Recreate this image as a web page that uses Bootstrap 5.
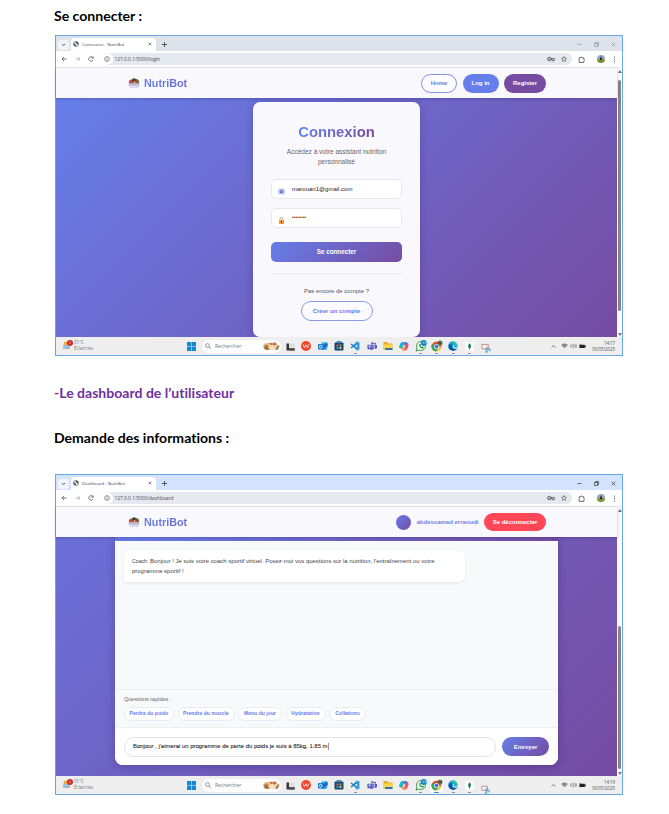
<!DOCTYPE html>
<html lang="fr">
<head>
<meta charset="utf-8">
<meta name="viewport" content="width=device-width, initial-scale=1">
<title>NutriBot</title>
<link href="https://cdn.jsdelivr.net/npm/bootstrap@5.3.0/dist/css/bootstrap.min.css" rel="stylesheet">
<style>
body{font-family:"Liberation Sans",Arial,sans-serif;font-size:6px;line-height:1;color:#333;background:#fff}
.sheet{width:669px;height:814px;padding:0 46px 0 54px}
.doc-h{font:700 14.05px/20px Lato,"Open Sans",sans-serif;font-variant-ligatures:none;color:#000;margin:0;white-space:nowrap}
.doc-h.violet{color:#7030a0}
.win{width:568px;height:321px;border:1px solid #67a7e2;background:#fff}
.win *{white-space:nowrap}
.ui{font-family:"Open Sans","Noto Sans",sans-serif}
.tabs{height:15px;flex:none;background:#dde2eb;padding:2px 6px 0 2px}
.win.active .tabs{background:#d3e2fd}
.tabbtn{width:11px;height:10px;border-radius:3px;background:#f1f4fa;margin-right:2px}
.tab-on{width:85px;height:13px;background:#fff;border-radius:4px 4px 0 0;padding:0 4px 1px 2px;font-size:4.3px;color:#444}
.tab-on .ticon{margin-right:3px}
.addr{height:17px;flex:none;padding:1px 4px 1px 3px;color:#4a4d51;border-bottom:1px solid #e9eaee}
.omni{width:471px;height:12px;border-radius:6px;background:#e5e8ef;margin-left:7px;padding:0 5px 0 0;font-size:4.85px}
.info-dot{width:12px;height:12px;border-radius:6px;background:#fff;margin-right:1.5px}
svg{display:block;flex:none}
.s5{width:5px;height:5px}.s6{width:6px;height:6px}.s7{width:7px;height:7px}.s8{width:8px;height:8px}.s9{width:9px;height:9px}.s10{width:10px;height:10px}.s12{width:12px;height:12px}
.view{height:269px}
.pagebody{width:561px}
.site-head{height:30px;flex:none;background:#f8f8fd;padding:0 71px 0 72px;box-shadow:0 1px 3px rgba(30,20,90,.28);z-index:1}
.brand{font-size:10.8px;font-weight:700;color:#667eea}
.brand span{background:linear-gradient(135deg,#667eea 20%,#6b68c8);-webkit-background-clip:text;color:transparent}
.pill{height:19px;border-radius:10px;font-weight:700;font-size:6px;color:#fff}
.p-home{width:36px;border:1px solid #7e91e4;color:#667eea;background:#fbfbff}
.p-log{width:36px;background:#667eea}
.p-reg{width:42px;background:#764ba2}
.p-out{width:62px;height:18px;background:#ff4757}
.grad{background:linear-gradient(135deg,#667eea,#764ba2)}
.stage{padding-left:59px;background:linear-gradient(135deg,#6a70d8,#764ba2)}
.login{width:167px;height:235px;margin-top:4px;border-radius:7px;background:#f8f8fd;padding:22px 18px 0;box-shadow:0 2px 8px rgba(40,20,90,.25)}
.login h2{font-size:14.8px;font-weight:700;line-height:16px;margin:0 0 7px;background:linear-gradient(135deg,#667eea 15%,#764ba2 85%);-webkit-background-clip:text;color:transparent}
.sub{font-size:6.5px;letter-spacing:.01px;line-height:10.4px;color:#666;margin-bottom:11.2px}
.field{height:20px;width:131px;border:1px solid #e6e7f0;border-radius:5px;background:#fff;color:#222;font-size:6px;padding-left:6px}
.field svg{margin:4px 7px 0 0}
.pw{font-size:4.6px;letter-spacing:.45px}
.btn-go{height:20px;width:131px;border-radius:5px;font-weight:700;font-size:6.3px;color:#fff;margin-top:14px}
.line{height:1px;background:#ebebf2;width:131px;margin-top:11px}
.p-new{width:72px;height:20px;border:1px solid #8a9be0;color:#667eea;background:#fbfbff;margin-top:7px;flex:none}
.sb{width:5px;background:#fafafa;padding:2px 0 1px}
.thumb{width:3px;background:#858585;border-radius:2px}
.t1{height:231px;margin-top:7px}.t2{height:143px;margin-top:114px}
.tri-u,.tri-d{border:2px solid transparent;width:0;height:0}
.tri-u{border-top:0;border-bottom:3px solid #777}
.tri-d{border-bottom:0;border-top:3px solid #777}
.task{height:18px;flex:none;background:#eee;color:#555}
.weather{width:127px;padding-left:7px;font-size:4.5px;line-height:5.6px;color:#777}
.weather svg{margin:-2px 1px 0 0}
.sbox{width:79px;height:13px;border-radius:7px;background:#fdfdfd;font-size:4.95px;color:#777;padding:0 1px 0 3px;margin-left:6px;margin-right:1px}
.app{width:16.3px;height:18px;position:relative}
.app.run::after{content:"";position:absolute;bottom:1px;left:6.6px;width:3px;height:1px;border-radius:1px;background:#8b8b8b}
.app.sel::before{content:"";position:absolute;inset:1.5px;background:#fafafa;border-radius:2px}
.app.sel::after{width:5px;left:5.6px;background:#3b8ad8}
.app svg{position:relative}
.app.low svg{top:2px}
.app.lower svg{top:4px}
.clock{width:27px;font-size:4.5px;line-height:6px;color:#555;letter-spacing:-.1px}
.avatar{width:15px;height:15px;border-radius:50%}
.chat{width:443px;height:228px;background:#f8f9fb;border-radius:0 0 8px 8px;box-shadow:0 2px 9px rgba(40,20,90,.3);overflow:hidden}
.chat-top{height:4px;flex:none}
.bubble{width:341px;height:32px;border-radius:7px 7px 7px 2px;background:#fff;margin:9px 0 0 9px;padding:7px 8px;font-size:5.96px;line-height:9.5px;color:#444;box-shadow:0 1px 3px rgba(0,0,0,.09)}
.bubble small{font-size:5.2px}
.quick{height:39px;border-top:1px solid #eceef2;border-bottom:1px solid #eceef2;padding:7px 9px 0;font-size:5.5px;color:#666}
.chip{height:14px;border:1px solid #e9ebf4;background:#fff;border-radius:7px;color:#667eea;font-size:5.1px;font-weight:700}
.c1{width:50px}.c2{width:57px}.c3{width:44px}.c4{width:40px}.c5{width:37px}
.ask{height:37px;background:#fff;padding:0 9px}
.msg{width:372px;height:20px;border:1px solid #dfe2ef;border-radius:10px;color:#222;padding-left:8px;font-size:5.95px;-webkit-text-stroke:.08px #222}
.caret{width:1px;height:7px;background:#999}
.send{width:47px;height:19px;border-radius:10px;color:#fff;font-weight:700;font-size:6px}
#h-login{margin-top:6px}
.w-one{margin-top:9px}
#h-dash{margin-top:27px}
#h-info{margin-top:25px}
.w-two{margin-top:26px}
.plus{margin-left:6px}
.wctl{gap:12px;opacity:.45}
.active .wctl{opacity:1}
.nav3{gap:7.5px;padding-left:2px}
.starico{margin-left:6px}
.tools{gap:6px}
.tools svg:first-child{margin-right:6px}
.links{gap:5.5px}
.f2{margin-top:9px}
.ask-new{margin-top:14px;color:#555;font-size:6px}
.field,.btn-go,.line{flex:none}
.uname{color:#7183de;font-size:6px}
.chips{gap:3.5px;margin-top:4px}
.quick,.ask{flex:none}
.wlogo{margin-left:4px}
.tray{gap:2px;padding-right:7px}
.wf{margin-left:3px}
</style>
<script src="https://cdn.jsdelivr.net/npm/bootstrap@5.3.0/dist/js/bootstrap.bundle.min.js"></script>
</head>
<body>
<svg width="0" height="0" class="position-absolute">
<defs>
<linearGradient id="gEdge" x1="0" y1="1" x2="1" y2="0"><stop offset="0" stop-color="#0867b9"/><stop offset=".55" stop-color="#19a5d9"/><stop offset="1" stop-color="#5cd66b"/></linearGradient>
</defs>
<symbol id="down" viewBox="0 0 10 10"><path d="M2 4l3 3 3-3" fill="none" stroke="currentColor" stroke-width="1.7"/></symbol>
<symbol id="up" viewBox="0 0 10 10"><path d="M1 7l4-4 4 4" fill="none" stroke="currentColor" stroke-width="1.5"/></symbol>
<symbol id="globe" viewBox="0 0 12 12"><circle cx="6" cy="6" r="5" fill="#fff" stroke="#4c5158" stroke-width="1.3"/><path d="M1 5l4 1 1 2-1 3-3-2zM6 1l-1 3 2 1 1 2 3-1-1-3z" fill="#4c5158"/></symbol>
<symbol id="x" viewBox="0 0 10 10"><path d="M1.5 1.5l7 7m0-7l-7 7" stroke="currentColor" stroke-width="1.5"/></symbol>
<symbol id="plus" viewBox="0 0 10 10"><path d="M5 0v10M0 5h10" stroke="currentColor" stroke-width="1.5"/></symbol>
<symbol id="min" viewBox="0 0 10 10"><path d="M1 5h8" stroke="currentColor" stroke-width="1.3"/></symbol>
<symbol id="max" viewBox="0 0 10 10"><path d="M1 3h6v6H1zM3 3V1h6v6H7" fill="none" stroke="currentColor" stroke-width="1.4"/></symbol>
<symbol id="back" viewBox="0 0 12 12"><path d="M11 6H2m4-4L2 6l4 4" fill="none" stroke="currentColor" stroke-width="1.5"/></symbol>
<symbol id="fwd" viewBox="0 0 12 12"><path d="M1 6h9M6 2l4 4-4 4" fill="none" stroke="currentColor" stroke-width="1.5"/></symbol>
<symbol id="reload" viewBox="0 0 12 12"><path d="M10 8a4.5 4.5 0 1 1-.6-5.2M10.5 1v3.5H7" fill="none" stroke="currentColor" stroke-width="1.5"/></symbol>
<symbol id="info" viewBox="0 0 12 12"><circle cx="6" cy="6" r="4.8" fill="none" stroke="currentColor" stroke-width="1.2"/><path d="M6 5.3v3.6M6 3v1.3" stroke="currentColor" stroke-width="1.4"/></symbol>
<symbol id="key" viewBox="0 0 14 10"><circle cx="4" cy="5" r="3" fill="none" stroke="currentColor" stroke-width="1.5"/><circle cx="4" cy="5" r="1" fill="currentColor"/><path d="M7 4h6v2.5h-1v2h-2v-2H7z" fill="none" stroke="currentColor" stroke-width="1.3"/></symbol>
<symbol id="star" viewBox="0 0 12 12"><path d="M6 1l1.500 3.400 3.600.3-2.800 2.400.9 3.600L6 8.800l-3.200 1.900.9-3.600L.9 4.700l3.600-.3z" fill="none" stroke="currentColor" stroke-width="1.2"/></symbol>
<symbol id="ext" viewBox="0 0 12 12"><path d="M2 3h2.500a1.300 1.300 0 0 1 2.600 0H10v3a1.300 1.300 0 0 1 0 2.500V11H2z" fill="none" stroke="currentColor" stroke-width="1.4"/></symbol>
<symbol id="face" viewBox="0 0 12 12"><circle cx="6" cy="6" r="6" fill="#8fa9c8"/><path d="M0 6h12a6 6 0 0 1-12 0" fill="#78983b"/><path d="M0 6h12v1.500H0" fill="#b7a83b"/><path d="M4.500 4h3l.5 4H4z" fill="#26323f"/><circle cx="6" cy="3.500" r="1.300" fill="#604c3a"/></symbol>
<symbol id="dots" viewBox="0 0 10 12"><path d="M5 1v2M5 5v2M5 9v2" stroke="currentColor" stroke-width="1.5"/></symbol>
<symbol id="salad" viewBox="0 0 24 24"><path d="M2 12C1 7 5 4 8 5c2-4 7-3 8-1 4 0 7 3 6 8z" fill="#467a3c"/><circle cx="7" cy="9" r="3.400" fill="#d44339"/><circle cx="17" cy="9" r="3.200" fill="#b84635"/><circle cx="12" cy="7" r="2.800" fill="#342d3a"/><path d="M11 11l2-4 2 4z" fill="#f0e4a8"/><path d="M1 12h22c0 7-4 10-8 10H9c-4 0-8-3-8-10" fill="#b8b3cd"/><path d="M3 15c4 3 14 3 18 0-2 6-5 7-8 7H9c-3 0-5-3-6-7" fill="#dedcea"/></symbol>
<symbol id="mail" viewBox="0 0 12 12"><rect y="1" width="12" height="10" fill="#cdd1ef"/><circle cx="6" cy="6" r="3.300" fill="#5274d3"/><path d="M4 6a2 2 0 1 1 3 1.700" fill="none" stroke="#c3ccf5"/></symbol>
<symbol id="lock" viewBox="0 0 12 14"><path d="M3 7V4a3 3 0 0 1 6 0v3" fill="none" stroke="#b2846e" stroke-width="1.5"/><rect x="1" y="6" width="10" height="8" rx="1" fill="#f39a35"/><path d="M6 8v4" stroke="#70402c" stroke-width="2"/></symbol>
<symbol id="sun" viewBox="0 0 20 20"><circle cx="7" cy="9" r="6" fill="#f4a53a"/><path d="M2 18a3.500 3.500 0 0 1 1-7c2-3 6-2 7 1 5-1 6 6 2 6z" fill="#8fc2f0"/><path d="M6 18l3-4 3 4z" fill="#e99a37"/><circle cx="14" cy="6" r="6" fill="#c92b2b"/><path d="M14 3v6" stroke="#f3c0c0" stroke-width="1.3"/></symbol>
<symbol id="winlogo" viewBox="0 0 18 18"><path d="M0 0h8.500v8.500H0zM9.500 0H18v8.500H9.500zM0 9.500h8.500V18H0zM9.500 9.500H18V18H9.500z" fill="#1587d5"/></symbol>
<symbol id="search" viewBox="0 0 12 12"><circle cx="5" cy="5" r="3.800" fill="none" stroke="currentColor" stroke-width="1.5"/><path d="M8 8l3.500 3.500" stroke="currentColor" stroke-width="1.7"/></symbol>
<symbol id="food" viewBox="0 0 34 20"><ellipse cx="9" cy="11" rx="8" ry="7" fill="#b98345"/><path d="M2 8c5-5 9-2 12 2" fill="none" stroke="#f0d69a" stroke-width="2.500"/><ellipse cx="20" cy="10" rx="9" ry="7" fill="#e9c99a"/><path d="M14 3l6 2 5-3 2 5-6 2-7-2z" fill="#cc6a53"/><path d="M10 13l9-6 7 8-8 4z" fill="#f3dfbe"/><path d="M24 17l4-5 2-4 3 2-4 8z" fill="#a0704c"/><circle cx="7" cy="14" r="2" fill="#7a5838"/></symbol>
<symbol id="desk" viewBox="0 0 18 18"><path d="M1 3h5v9h11v5H1z" fill="#353535"/><path d="M7 3h10v8H7z" fill="#dedede"/><path d="M6 12h11v5H6z" fill="#555"/></symbol>
<symbol id="wps" viewBox="0 0 20 20"><circle cx="10" cy="10" r="10" fill="#f1462f"/><path d="M4 6.500l3 7 3-6 3 6 3-7" fill="none" stroke="#ffe5d9" stroke-width="1.700"/></symbol>
<symbol id="outlook" viewBox="0 0 20 20"><path d="M7 3l10-1 3 7-3 9H7z" fill="#39abe8"/><path d="M7 10l12-7v6l-9 8z" fill="#1864b9"/><rect y="6" width="11" height="11" rx="2" fill="#1678d1"/><circle cx="5.500" cy="11.500" r="2.800" fill="none" stroke="#fff" stroke-width="1.500"/></symbol>
<symbol id="store" viewBox="0 0 20 20"><path d="M6 4V1h8v3" fill="none" stroke="#278bd0" stroke-width="2"/><rect x="1" y="3" width="18" height="16" rx="2" fill="#16446f"/><path d="M5 7h4v4H5z" fill="#ec5c43"/><path d="M11 7h4v4h-4z" fill="#6dbb49"/><path d="M5 12h4v4H5z" fill="#22a1ef"/><path d="M11 12h4v4h-4z" fill="#f3bd31"/></symbol>
<symbol id="code" viewBox="0 0 20 20"><path d="M14 1l5 2v14l-5 2z" fill="#27a2e8"/><path d="M14 5L2 14M2 6l12 9" stroke="#147bc3" stroke-width="3"/><path d="M14 1L7 9l7 10" fill="none" stroke="#1e91d8" stroke-width="2"/></symbol>
<symbol id="teams" viewBox="0 0 22 20"><circle cx="12" cy="4" r="3" fill="#6a6fd0"/><circle cx="18" cy="5" r="2" fill="#5158b9"/><path d="M7 8h9v6a5 5 0 0 1-9 3z" fill="#747ae0"/><path d="M17 8h5v6q-2 4-5 2z" fill="#555bc0"/><rect x="1" y="7" width="10" height="10" rx="1.500" fill="#4d53b5"/><path d="M3 10h6M6 10v5" stroke="#fff" stroke-width="1.600"/></symbol>
<symbol id="folder" viewBox="0 0 20 18"><path d="M1 1h7l2 3h9v12H1z" fill="#e7a92b"/><path d="M1 6h18v11H1z" fill="#ffd451"/><path d="M4 13h15v4H4z" fill="#2878b8"/></symbol>
<symbol id="copilot" viewBox="0 0 20 20"><path d="M6 2h8q2 0 3 4l-5 1-4 8H3q-3 0-2-5l2-5z" fill="#3188df"/><path d="M3 5l4-3h4L8 14H3q-3 0-2-4z" fill="#29b5c5"/><path d="M12 4h5q3 1 2 6l-3 7q-1 2-5 2H7l4-5z" fill="#e65581"/><path d="M6 13h7l-3 6H8q-2 0-4-5z" fill="#f3a638"/><path d="M13 2q3 0 4 4l-4 1z" fill="#8d52cf"/><path d="M9 8h3l-2 5H8z" fill="#eee"/></symbol>
<symbol id="whats" viewBox="0 0 24 24"><path d="M2 22l2-6a9 9 0 1 1 4 4z" fill="#f5fff7" stroke="#3d9950" stroke-width="2"/><path d="M8 9q0 7 8 9l2-3-3-2-2 1-2-3 1-2-2-2z" fill="#3d9950"/><circle cx="17.500" cy="6" r="6" fill="#1687c5"/><path d="M15 4h2v4m2-4h3l-2 4" fill="none" stroke="#bfe2f3" stroke-width="1"/></symbol>
<symbol id="chrome" viewBox="0 0 24 24"><circle cx="11" cy="13" r="10" fill="#f1c33b"/><path d="M11 13H21A10 10 0 0 0 2 9l5 9z" fill="#e24a3a"/><path d="M11 13L2 8a10 10 0 0 0 8 15l5-8z" fill="#38a35a"/><circle cx="11" cy="13" r="5" fill="#fff"/><circle cx="11" cy="13" r="3.800" fill="#3b7be0"/><circle cx="18" cy="6" r="5" fill="#6c7052"/><path d="M14 6h8" stroke="#3b4038" stroke-width="2"/></symbol>
<symbol id="edge" viewBox="0 0 20 20"><circle cx="10" cy="10" r="9.500" fill="url(#gEdge)"/><path d="M8 8c-2 4 1 9 7 8 2 0 3-1 4-2-2 5-7 6-11 5-5-1-8-6-6-10 1-3 4-3 6-1" fill="#0b57a4"/><path d="M10 9c2-1 3 1 2 3 1 2 4 2 7 0v2c-5 3-11 1-9-5" fill="#eef7fb"/></symbol>
<symbol id="mongo" viewBox="0 0 20 20"><rect width="20" height="20" rx="3" fill="#fafafa"/><path d="M10 3c5 5 4 9 0 12-4-3-4-7 0-12" fill="#13794e"/><path d="M10 13v4" stroke="#234b3b" stroke-width="1.500"/></symbol>
<symbol id="snip" viewBox="0 0 22 22"><path d="M2 3h14v10H2z" fill="#f5f5f5" stroke="#b4786b" stroke-width="1.800"/><path d="M9 13h10M13 7l0 12" stroke="#6d97ae" stroke-width="2"/><circle cx="12" cy="19" r="2.200" fill="none" stroke="#4399c8" stroke-width="1.700"/><circle cx="19" cy="15" r="2.200" fill="none" stroke="#4399c8" stroke-width="1.700"/></symbol>
<symbol id="wifi" viewBox="0 0 16 12"><path d="M1 4q7-6 14 0L8 11z" fill="#aaa"/><path d="M1 4q7-6 14 0M3.500 6.500q4.500-4 9 0M6 9q2-2 4 0" fill="none" stroke="#454545" stroke-width="1.200"/></symbol>
<symbol id="vol" viewBox="0 0 16 12"><path d="M1 4h3l3-3v10L4 8H1zM9 4q2 2 0 4M11 2q4 4 0 8M13 1q5 5 0 10" fill="none" stroke="#666" stroke-width="1.200"/></symbol>
<symbol id="batt" viewBox="0 0 18 12"><path d="M1 3h14v8H1zM16 5h2v4h-2z" fill="#222"/><path d="M2 0l4 4-3 3z" fill="#333"/></symbol>
</svg>

<main class="sheet d-flex flex-column">
  <h1 class="doc-h" id="h-login">Se connecter :</h1>

  <section class="win w-one d-flex flex-column ms-auto">
    <div class="tabs ui d-flex align-items-center">
      <span class="tabbtn d-flex align-items-center justify-content-center"><svg class="s5"><use href="#down"/></svg></span>
      <div class="tab-on d-flex align-items-center"><svg class="s6 ticon"><use href="#globe"/></svg><span>Connexion - NutriBot</span><svg class="ms-auto" width="4" height="4"><use href="#x"/></svg></div>
      <svg class="plus" width="5" height="5"><use href="#plus"/></svg>
      <div class="wctl d-flex align-items-center ms-auto"><svg class="s5"><use href="#min"/></svg><svg class="s5"><use href="#max"/></svg><svg class="s5"><use href="#x"/></svg></div>
    </div>
    <div class="addr ui d-flex align-items-center">
      <div class="nav3 d-flex"><svg class="s6"><use href="#back"/></svg><svg class="s6 opacity-50"><use href="#fwd"/></svg><svg class="s6"><use href="#reload"/></svg></div>
      <div class="omni d-flex align-items-center"><span class="info-dot d-flex align-items-center justify-content-center"><svg class="s6"><use href="#info"/></svg></span><span>127.0.0.1:5000/login</span><svg class="ms-auto" width="8" height="6"><use href="#key"/></svg><svg class="s6 starico"><use href="#star"/></svg></div>
      <div class="tools d-flex align-items-center ms-auto"><svg class="s7"><use href="#ext"/></svg><svg class="s8"><use href="#face"/></svg><svg class="s7"><use href="#dots"/></svg></div>
    </div>
    <div class="view d-flex">
      <div class="pagebody d-flex flex-column">
        <header class="site-head d-flex align-items-center position-relative">
          <div class="brand d-flex align-items-center"><svg class="s12 me-1"><use href="#salad"/></svg><span>NutriBot</span></div>
          <nav class="links d-flex ms-auto"><a class="pill p-home d-flex align-items-center justify-content-center text-decoration-none">Home</a><a class="pill p-log d-flex align-items-center justify-content-center text-decoration-none">Log in</a><a class="pill p-reg d-flex align-items-center justify-content-center text-decoration-none">Register</a></nav>
        </header>
        <div class="grad flex-grow-1 d-flex justify-content-center align-items-start">
          <form class="login d-flex flex-column align-items-center text-center">
            <h2>Connexion</h2>
            <div class="sub">Accédez à votre assistant nutrition<br>personnalisé</div>
            <div class="field d-flex align-items-center"><svg class="s7"><use href="#mail"/></svg><span>marouan1@gmail.com</span></div>
            <div class="field f2 d-flex align-items-center"><svg class="s7"><use href="#lock"/></svg><span class="pw">•••••••</span></div>
            <div class="btn-go grad d-flex align-items-center justify-content-center">Se connecter</div>
            <div class="line"></div>
            <div class="ask-new">Pas encore de compte ?</div>
            <div class="pill p-new d-flex align-items-center justify-content-center">Créer un compte</div>
          </form>
        </div>
      </div>
      <div class="sb d-flex flex-column align-items-center"><i class="tri-u"></i><i class="thumb t1"></i><i class="tri-d mt-auto"></i></div>
    </div>
    <div class="task ui d-flex align-items-center">
      <div class="weather d-flex align-items-center"><svg class="s10"><use href="#sun"/></svg><div>31°C<br>Éclaircies</div></div>
      <svg class="s9 wlogo"><use href="#winlogo"/></svg>
      <div class="sbox d-flex align-items-center"><svg class="s6 me-1"><use href="#search"/></svg>Rechercher<svg class="ms-auto" width="17" height="10"><use href="#food"/></svg></div>
      <div class="apps d-flex">
        <span class="app d-flex align-items-center justify-content-center"><svg class="s9"><use href="#desk"/></svg></span>
        <span class="app d-flex align-items-center justify-content-center"><svg class="s10"><use href="#wps"/></svg></span>
        <span class="app d-flex align-items-center justify-content-center"><svg class="s10"><use href="#outlook"/></svg></span>
        <span class="app d-flex align-items-center justify-content-center"><svg class="s10"><use href="#store"/></svg></span>
        <span class="app run d-flex align-items-center justify-content-center"><svg class="s10"><use href="#code"/></svg></span>
        <span class="app d-flex align-items-center justify-content-center"><svg class="s10"><use href="#teams"/></svg></span>
        <span class="app d-flex align-items-center justify-content-center"><svg class="s10"><use href="#folder"/></svg></span>
        <span class="app d-flex align-items-center justify-content-center"><svg class="s10"><use href="#copilot"/></svg></span>
        <span class="app run d-flex align-items-center justify-content-center"><svg class="s12"><use href="#whats"/></svg></span>
        <span class="app run d-flex align-items-center justify-content-center"><svg class="s12"><use href="#chrome"/></svg></span>
        <span class="app run d-flex align-items-center justify-content-center"><svg class="s10"><use href="#edge"/></svg></span>
        <span class="app run d-flex align-items-center justify-content-center"><svg class="s9"><use href="#mongo"/></svg></span>
        <span class="app low d-flex align-items-center justify-content-center"><svg class="s10"><use href="#snip"/></svg></span>
      </div>
      <div class="tray d-flex align-items-center ms-auto"><svg class="s5"><use href="#up"/></svg><svg class="wf" width="7" height="6"><use href="#wifi"/></svg><svg width="7" height="6"><use href="#vol"/></svg><svg width="7" height="6"><use href="#batt"/></svg><div class="clock text-end">14:17<br>30/05/2025</div></div>
    </div>
  </section>

  <h2 class="doc-h violet" id="h-dash">-Le dashboard de l’utilisateur</h2>
  <h2 class="doc-h" id="h-info">Demande des informations :</h2>

  <section class="win w-two active d-flex flex-column ms-auto">
    <div class="tabs ui d-flex align-items-center">
      <span class="tabbtn d-flex align-items-center justify-content-center"><svg class="s5"><use href="#down"/></svg></span>
      <div class="tab-on d-flex align-items-center"><svg class="s6 ticon"><use href="#globe"/></svg><span>Dashboard - NutriBot</span><svg class="ms-auto" width="4" height="4"><use href="#x"/></svg></div>
      <svg class="plus" width="5" height="5"><use href="#plus"/></svg>
      <div class="wctl d-flex align-items-center ms-auto"><svg class="s5"><use href="#min"/></svg><svg class="s5"><use href="#max"/></svg><svg class="s5"><use href="#x"/></svg></div>
    </div>
    <div class="addr ui d-flex align-items-center">
      <div class="nav3 d-flex"><svg class="s6"><use href="#back"/></svg><svg class="s6 opacity-50"><use href="#fwd"/></svg><svg class="s6"><use href="#reload"/></svg></div>
      <div class="omni d-flex align-items-center"><span class="info-dot d-flex align-items-center justify-content-center"><svg class="s6"><use href="#info"/></svg></span><span>127.0.0.1:5000/dashboard</span><svg class="ms-auto" width="8" height="6"><use href="#key"/></svg><svg class="s6 starico"><use href="#star"/></svg></div>
      <div class="tools d-flex align-items-center ms-auto"><svg class="s7"><use href="#ext"/></svg><svg class="s8"><use href="#face"/></svg><svg class="s7"><use href="#dots"/></svg></div>
    </div>
    <div class="view d-flex">
      <div class="pagebody d-flex flex-column">
        <header class="site-head d-flex align-items-center position-relative">
          <div class="brand d-flex align-items-center"><svg class="s12 me-1"><use href="#salad"/></svg><span>NutriBot</span></div>
          <div class="links d-flex align-items-center ms-auto"><i class="avatar grad"></i><b class="uname">abdessamad erraoudi</b><a class="pill p-out d-flex align-items-center justify-content-center text-decoration-none">Se déconnecter</a></div>
        </header>
        <div class="stage flex-grow-1">
          <div class="chat d-flex flex-column">
            <div class="chat-top grad"></div>
            <div class="bubble"><small>Coach:</small> Bonjour ! Je suis votre coach sportif virtuel. Posez-moi vos questions sur la nutrition, l'entraînement ou votre<br>programme sportif !</div>
            <div class="quick mt-auto">
              <div>Questions rapides :</div>
              <div class="chips d-flex"><span class="chip c1 d-flex align-items-center justify-content-center">Perdre du poids</span><span class="chip c2 d-flex align-items-center justify-content-center">Prendre du muscle</span><span class="chip c3 d-flex align-items-center justify-content-center">Menu du jour</span><span class="chip c4 d-flex align-items-center justify-content-center">Hydratation</span><span class="chip c5 d-flex align-items-center justify-content-center">Collations</span></div>
            </div>
            <div class="ask d-flex align-items-center justify-content-between"><div class="msg d-flex align-items-center"><span>Bonjour , j'aimerai un programme de perte du poids je suis à 85kg, 1.85 m</span><i class="caret"></i></div><div class="send grad d-flex align-items-center justify-content-center">Envoyer</div></div>
          </div>
        </div>
      </div>
      <div class="sb d-flex flex-column align-items-center"><i class="tri-u"></i><i class="thumb t2"></i><i class="tri-d mt-auto"></i></div>
    </div>
    <div class="task ui d-flex align-items-center">
      <div class="weather d-flex align-items-center"><svg class="s10"><use href="#sun"/></svg><div>31°C<br>Éclaircies</div></div>
      <svg class="s9 wlogo"><use href="#winlogo"/></svg>
      <div class="sbox d-flex align-items-center"><svg class="s6 me-1"><use href="#search"/></svg>Rechercher<svg class="ms-auto" width="17" height="10"><use href="#food"/></svg></div>
      <div class="apps d-flex">
        <span class="app d-flex align-items-center justify-content-center"><svg class="s9"><use href="#desk"/></svg></span>
        <span class="app d-flex align-items-center justify-content-center"><svg class="s10"><use href="#wps"/></svg></span>
        <span class="app d-flex align-items-center justify-content-center"><svg class="s10"><use href="#outlook"/></svg></span>
        <span class="app d-flex align-items-center justify-content-center"><svg class="s10"><use href="#store"/></svg></span>
        <span class="app run d-flex align-items-center justify-content-center"><svg class="s10"><use href="#code"/></svg></span>
        <span class="app d-flex align-items-center justify-content-center"><svg class="s10"><use href="#teams"/></svg></span>
        <span class="app d-flex align-items-center justify-content-center"><svg class="s10"><use href="#folder"/></svg></span>
        <span class="app d-flex align-items-center justify-content-center"><svg class="s10"><use href="#copilot"/></svg></span>
        <span class="app run d-flex align-items-center justify-content-center"><svg class="s12"><use href="#whats"/></svg></span>
        <span class="app run sel d-flex align-items-center justify-content-center"><svg class="s12"><use href="#chrome"/></svg></span>
        <span class="app run d-flex align-items-center justify-content-center"><svg class="s10"><use href="#edge"/></svg></span>
        <span class="app run d-flex align-items-center justify-content-center"><svg class="s9"><use href="#mongo"/></svg></span>
        <span class="app low lower d-flex align-items-center justify-content-center"><svg class="s9"><use href="#snip"/></svg></span>
      </div>
      <div class="tray d-flex align-items-center ms-auto"><svg class="s5"><use href="#up"/></svg><svg class="wf" width="7" height="6"><use href="#wifi"/></svg><svg width="7" height="6"><use href="#vol"/></svg><svg width="7" height="6"><use href="#batt"/></svg><div class="clock text-end">14:19<br>30/05/2025</div></div>
    </div>
  </section>
</main>
</body>
</html>
